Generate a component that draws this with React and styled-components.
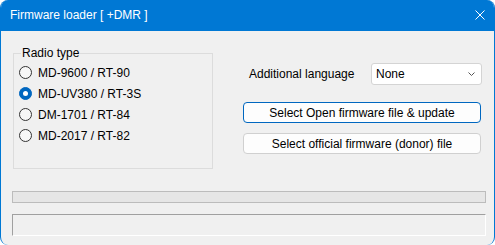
import React, { useState } from 'react';
import styled, { createGlobalStyle } from 'styled-components';

const GlobalStyle = createGlobalStyle`
  html, body {
    margin: 0;
    padding: 0;
    background: #ffffff;
  }
  * {
    box-sizing: border-box;
  }
`;

const Window = styled.div`
  width: 495px;
  height: 245px;
  display: flex;
  flex-direction: column;
  background: #f0f0f0;
  border-left: 1px solid #0078d4;
  border-right: 1px solid #0078d4;
  border-radius: 8px;
  overflow: hidden;
  font-family: "Liberation Sans", Arial, sans-serif;
  font-size: 12px;
  color: #000;
`;

const TitleBar = styled.div`
  height: 31px;
  flex: none;
  display: flex;
  align-items: center;
  justify-content: space-between;
  padding: 0 9px 1px 9px;
  background: #0078d4;
  color: #fff;
`;

const Title = styled.span`
  font-size: 12px;
  line-height: 14px;
`;

const CloseButton = styled.button`
  width: 10px;
  height: 10px;
  padding: 0;
  border: none;
  background: none;
  display: flex;
  cursor: pointer;
`;

const Body = styled.div`
  flex: 1;
  display: flex;
  flex-direction: column;
  padding: 15px 8px 0 11px;
`;

const TopRow = styled.div`
  display: flex;
  gap: 30px;
  margin-left: 1px;
`;

const GroupBox = styled.fieldset`
  width: 200px;
  height: 123px;
  margin: 0;
  padding: 2px 0 0 5px;
  border: 1px solid #dcdcdc;
  min-inline-size: 0;
`;

const Legend = styled.legend`
  margin-left: 2px;
  padding: 0 1px;
  line-height: 14px;
`;

const RadioRow = styled.label`
  height: 21px;
  display: flex;
  align-items: center;
  gap: 6px;
  line-height: 14px;
  cursor: default;
`;

const RadioCircle = styled.span`
  width: 13px;
  height: 13px;
  border-radius: 50%;
  flex: none;
  display: flex;
  align-items: center;
  justify-content: center;
  border: 1px solid ${({ checked }) => (checked ? '#0067c0' : '#333333')};
  background: ${({ checked }) => (checked ? '#0067c0' : '#f7f7f7')};

  &::after {
    content: '';
    width: 5px;
    height: 5px;
    border-radius: 50%;
    background: #fff;
    display: ${({ checked }) => (checked ? 'block' : 'none')};
  }
`;

const RightColumn = styled.div`
  width: 239px;
  padding-top: 17px;
  display: flex;
  flex-direction: column;
`;

const LangRow = styled.div`
  height: 22px;
  display: flex;
  align-items: center;
  padding-left: 6px;
`;

const Select = styled.div`
  margin-left: auto;
  width: 111px;
  height: 22px;
  display: flex;
  align-items: center;
  justify-content: space-between;
  padding: 0 6px 0 4px;
  background: #fff;
  border: 1px solid #d4d4d4;
  border-radius: 3px;
  line-height: 14px;
`;

const Button = styled.button`
  width: 238px;
  height: 21px;
  margin-top: ${({ gap }) => gap}px;
  padding: 0;
  font-family: inherit;
  font-size: 12px;
  line-height: 14px;
  color: #000;
  background: #fdfdfd;
  border: 1px solid ${({ focused }) => (focused ? '#0067c0' : '#d0d0d0')};
  border-radius: 4px;
  cursor: default;
`;

const ProgressBar = styled.div`
  height: 12px;
  margin-top: 22px;
  background: #e6e6e6;
  border: 1px solid #bcbcbc;
`;

const StatusBox = styled.div`
  height: 22px;
  margin-top: 11px;
  background: #f0f0f0;
  border-top: 1px solid #a0a0a0;
  border-left: 1px solid #a0a0a0;
  border-bottom: 1px solid #ffffff;
  border-right: 1px solid #ffffff;
`;

const radios = [
  'MD-9600 / RT-90',
  'MD-UV380 / RT-3S',
  'DM-1701 / RT-84',
  'MD-2017 / RT-82',
];

export default function App() {
  const [selected, setSelected] = useState(1);

  return (
    <>
      <GlobalStyle />
      <Window>
        <TitleBar>
          <Title>Firmware loader [ +DMR ]</Title>
          <CloseButton aria-label="Close">
            <svg width="10" height="10" viewBox="0 0 10 10">
              <path d="M0.5 0.5 L9.5 9.5 M9.5 0.5 L0.5 9.5" stroke="#fff" strokeWidth="1" fill="none" />
            </svg>
          </CloseButton>
        </TitleBar>
        <Body>
          <TopRow>
            <GroupBox>
              <Legend>Radio type</Legend>
              {radios.map((name, i) => (
                <RadioRow key={name} onClick={() => setSelected(i)}>
                  <RadioCircle checked={selected === i} />
                  {name}
                </RadioRow>
              ))}
            </GroupBox>
            <RightColumn>
              <LangRow>
                Additional language
                <Select>
                  None
                  <svg width="7" height="4" viewBox="0 0 7 4">
                    <path d="M0.5 0.5 L3.5 3.5 L6.5 0.5" stroke="#555" strokeWidth="1" fill="none" />
                  </svg>
                </Select>
              </LangRow>
              <Button gap={17} focused>Select Open firmware file &amp; update</Button>
              <Button gap={10}>Select official firmware (donor) file</Button>
            </RightColumn>
          </TopRow>
          <ProgressBar />
          <StatusBox />
        </Body>
      </Window>
    </>
  );
}
